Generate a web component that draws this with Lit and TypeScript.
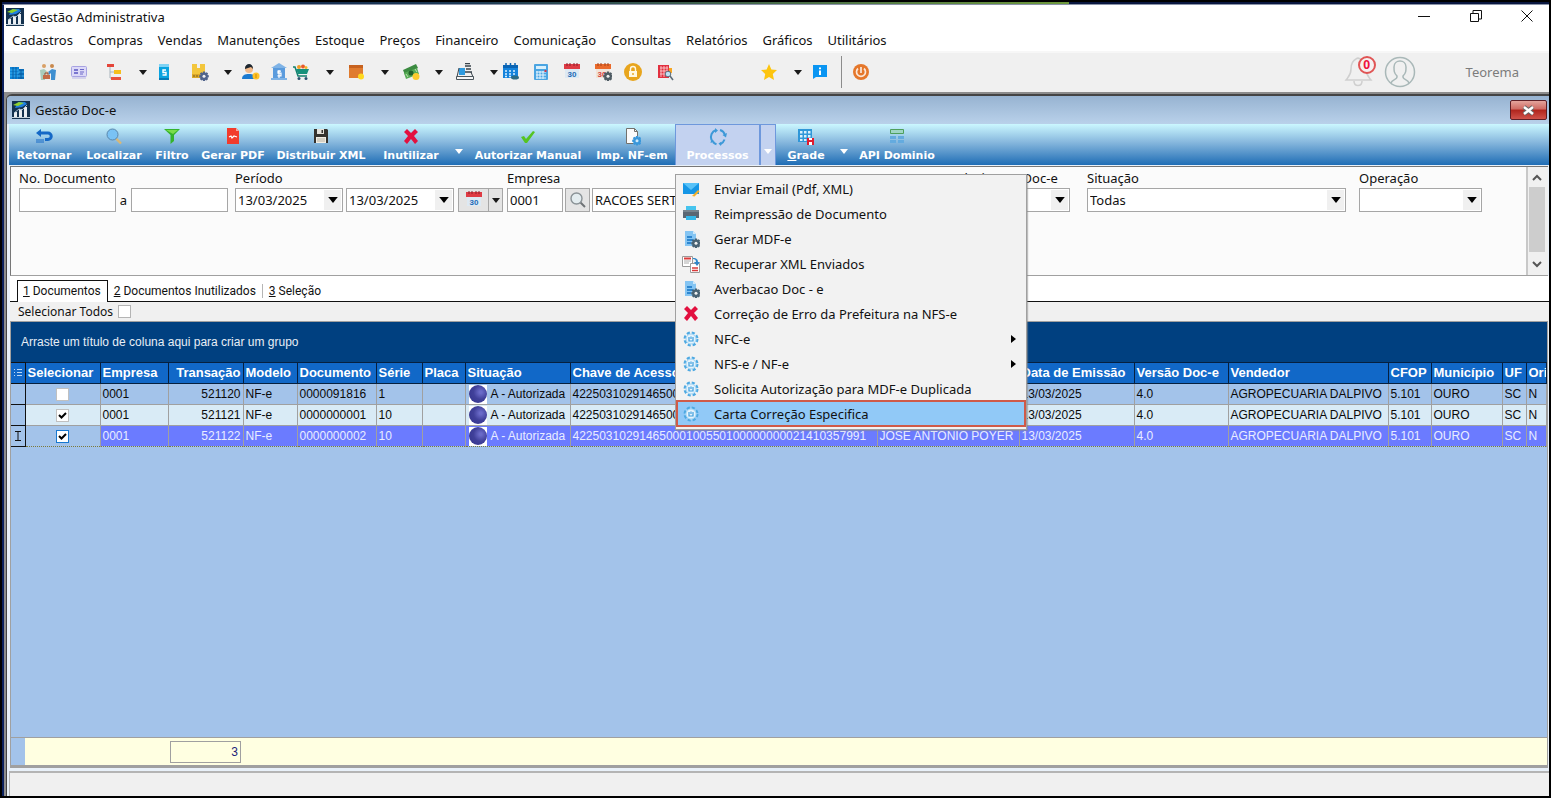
import { LitElement, html, svg, css, nothing, TemplateResult } from "lit";
import { customElement } from "lit/decorators.js";
import { classMap } from "lit/directives/class-map.js";
import { styleMap } from "lit/directives/style-map.js";

const gear = (x: number, y: number, c: string, hole: string) => svg`
  <g transform="translate(${x} ${y})">
    <path fill=${c} d="M-1-4.5h2l.4 1.4 1.3-.7 1.4 1.4-.7 1.3 1.4.4v2l-1.4.4.7 1.3-1.4 1.4-1.3-.7-.4 1.4h-2l-.4-1.4-1.3.7-1.4-1.4.7-1.3-1.4-.4v-2l1.4-.4-.7-1.3 1.4-1.4 1.3.7z"/>
    <circle r="1.5" cy=".3" fill=${hole}/>
  </g>`;

const ICONS: Record<string, TemplateResult> = {
  app: svg`<rect width="18" height="18" fill="#14324f"/><path d="M6 1h7l2 2-5 3-7 1z" fill="#1f7fe0"/><path d="M1 4l6-3 5 1-6 3z" fill="#8fd12c"/><path d="M2 11h3v5H2zM7 8h3v8H7zM12 6h3v10h-3z" fill="#e9eef2"/><path d="M2 12l5-4 3 1 5-5" stroke="#9fb6c8" fill="none"/><path d="M0 16h18v1H0z" fill="#c4d2dc"/>`,
  building: svg`<path d="M2 4h9v12H2z" fill="#0d84d8"/><path d="M10 6h6v10h-6z" fill="#0b6cb8"/><path d="M2 7h9M2 10h9M2 13h14M10 9h6" stroke="#3db2f3"/><path d="M5 4v12M8 4v12M13 7v9" stroke="#0a5c9f"/>`,
  people: svg`<circle cx="5" cy="3" r="2" fill="#d9a066"/><circle cx="13" cy="3" r="2" fill="#c98a4d"/><path d="M1 7l4-1 4 3-1 3-2-2v7H2z" fill="#a9cdbb"/><path d="M17 7l-4-1-4 3 1 3 2-2v7h4z" fill="#3f8fd0"/><path d="M7 8l3 2-3 2z" fill="#f3c9a0"/><path d="M4 12h7v4H4z" fill="#c46c45"/><path d="M6 12v-2h3v2" stroke="#8a4a30" fill="none"/>`,
  card: svg`<rect x="1.500" y="3.500" width="15" height="10" rx="1" fill="#dcd9f7" stroke="#a7a2e2"/><path d="M4 7h4M4 10h4" stroke="#7a76cf" stroke-width="2"/><path d="M10 6.500h4M10 9h4M10 11h3" stroke="#6c68c8"/><path d="M2 15h14" stroke="#b9b5e8"/>`,
  tree: svg`<path d="M5 4v11h5M5 9h5" fill="none" stroke="#a8b4bd"/><path d="M2 1h7v3H2z" fill="#e4453a"/><path d="M9 7h7v4H9z" fill="#f6bf1d"/><path d="M6 14h10v3H6z" fill="#e8513f"/>`,
  book: svg`<path d="M4 1h10v16H4z" fill="#09a3e0"/><path d="M4 1h10v3H4z" fill="#7fd3f4"/><path d="M4 15h10v2H4z" fill="#0579b5"/><path d="M11 7H8v2.500h3V12H7.500" fill="none" stroke="#fff" stroke-width="1.400"/>`,
  box: svg`<path d="M1 1h5v4h3V1h5v14H1z" fill="#f3c63c"/><path d="M1 11h8v4H1z" fill="#dca928"/><path d="M3 12v2M6 12v2" stroke="#7b5d20"/>${gear(13, 13, "#51648c", "#f0f0f0")}`,
  person: svg`<circle cx="7" cy="6" r="4" fill="#f2b98a"/><path d="M3 6c-.5-6 8-7 8 0L9 4z" fill="#1d2731"/><path d="M0 16c0-4 3-5 7-5s6 1 6 5z" fill="#1b7ad0"/><circle cx="14" cy="13" r="3.500" fill="#ffc229"/><path d="M14 11v4" stroke="#d18b00"/>`,
  bank: svg`<path d="M9 0l8 5H1z" fill="#7fb3e6"/><path d="M3 5h12v10H3z" fill="#5a9bdd"/><path d="M1 15h16v2H1z" fill="#7fb3e6"/><path d="M11 8.200H8v2h3v2.600H7.500M9 7v8" fill="none" stroke="#fff" stroke-width="1.200"/>`,
  cart: svg`<path d="M1 4h2l3 9h9" fill="none" stroke="#12806e" stroke-width="1.500"/><path d="M4 6h13l-2 5H6z" fill="#16917b"/><circle cx="7" cy="4" r="2" fill="#f09b26"/><circle cx="11" cy="3.500" r="2" fill="#e85a2a"/><circle cx="14" cy="4.500" r="1.500" fill="#f2b62a"/><circle cx="7" cy="15.500" r="1.500" fill="#28516e"/><circle cx="14" cy="15.500" r="1.500" fill="#28516e"/>`,
  carton: svg`<path d="M2 2h14v13H2z" fill="#e07b2e"/><path d="M2 2h14v3H2z" fill="#c7621f"/><circle cx="14" cy="13.500" r="3" fill="#ffd91f"/>`,
  money: svg`<path d="M1 7l13-6 2 4-13 7z" fill="#3c8b41"/><path d="M2 10l13-5 2 6-13 5z" fill="#57ab55"/><circle cx="9" cy="10" r="2.500" fill="#22602b"/><path d="M4 11l2 3M13 6l2 3" stroke="#bfe2b4"/><circle cx="14" cy="13.500" r="3.500" fill="#ffcb2e"/>`,
  register: svg`<path d="M3 5h6v7H3z" fill="#2f9be0"/><path d="M9 .500h5M9 3h6M10 6h5M9 9h7" stroke="#39434b" stroke-width="1.300"/><path d="M3 5L1 14M15 9l2 5" stroke="#39434b"/><path d="M.500 13.500h17v3H.500z" fill="#f6f6f6" stroke="#4c565d"/>`,
  calendar: svg`<path d="M1 2h15v13H1z" fill="#1583dc"/><path d="M1 2h15v3H1z" fill="#0a64b4"/><path d="M3 8h2M7 8h2M11 8h2M3 11h2M7 11h2M11 11h2M3 13.500h2M7 13.500h2" stroke="#d7efff" stroke-width="1.500"/><path d="M4 0v3M8.500 0v3M13 0v3" stroke="#0a64b4" stroke-width="1.500"/><ellipse cx="13" cy="14.500" rx="4" ry="2" fill="#2c6b85"/>`,
  calculator: svg`<rect x="2" y="1" width="14" height="16" rx="1" fill="#4ba5e2"/><path d="M4 3h10v3H4z" fill="#d9f0fc"/><path d="M5 8v8M8 8v8M11 8v8M4 9h10M4 12h10M4 15h10" stroke="#e8f6ff"/><path d="M13.500 7v2" stroke="#d0374a" stroke-width="2"/>`,
  cal30: svg`<path d="M2 3h14v12H2z" fill="#dde9f3"/><path d="M1 1h16v5H1z" fill="#de3b44"/><path d="M4 0v3M7 0v3M11 0v3M14 0v3" stroke="#8f1f2a"/><text x="9" y="14" font-family="Liberation Sans" font-size="8" font-weight="700" text-anchor="middle" fill="#1e6cb6">30</text>`,
  cal30g: svg`<path d="M2 3h14v12H2z" fill="#f1e3d9"/><path d="M1 1h16v5H1z" fill="#ea6a2b"/><path d="M4 0v3M7 0v3M11 0v3M14 0v3" stroke="#a3431a"/><text x="8" y="14" font-family="Liberation Sans" font-size="8" font-weight="700" text-anchor="middle" fill="#d6453c">30</text>${gear(14, 13, "#4e5b63", "#f0f0f0")}`,
  lock: svg`<circle cx="9" cy="9" r="9" fill="#e8a51d"/><path d="M5 8h8v6H5z" fill="#fff8e2"/><path d="M6.500 8V6a2.500 2.500 0 0 1 5 0v2" fill="none" stroke="#fff8e2" stroke-width="1.400"/><path d="M9 10v2" stroke="#e8a51d" stroke-width="1.400"/>`,
  search: svg`<path d="M2 2h11v13H2z" fill="#e2303f"/><path d="M4 5h8M4 8h8M4 11h8M5 3v11M8 3v11M11 3v11" stroke="#ffd9dc" stroke-width=".8"/><path d="M13 5h3v5h-3z" fill="#f6a623"/><circle cx="12" cy="11" r="2.800" fill="#bfe1f5" stroke="#5b6b77"/><path d="M14 13l3 4" stroke="#5b6b77" stroke-width="1.500"/>`,
  star: svg`<path d="M9 1l2.400 5.400 5.600.6-4.200 3.900L14 17l-5-3.100L4 17l1.200-6.100L1 7l5.600-.6z" fill="#fdc50f"/>`,
  info: svg`<path d="M2 2h14v12H5l-3 2z" fill="#0a95f2"/><path d="M9 4.500v1.800M9 7.500V12" stroke="#fff" stroke-width="2"/>`,
  power: svg`<circle cx="9" cy="9" r="8" fill="#e5772b"/><path d="M6 5.500a4.500 4.500 0 1 0 6 0M9 4v6" fill="none" stroke="#fbe8da" stroke-width="1.700"/>`,
  back: svg`<path d="M1 5l5-4v2.500h7a4 4 0 0 1 0 9.500h-3v-3h3a1.500 1.500 0 0 0 0-3.500H6V9z" fill="#1468c6"/><path d="M2 11v4M4 11v4M6 11v4M8 11v4" stroke="#1468c6"/>`,
  lens: svg`<path d="M11 10.500l5 5" stroke="#d8b878" stroke-width="2.400"/><circle cx="7.500" cy="6.500" r="5.500" fill="#79c2f4" stroke="#5a86ab"/>`,
  funnel: svg`<path d="M1 1h16l-6 6v6l-3.500 3V7z" fill="#35b32c"/><path d="M3 2h12l-5 4z" fill="#7bdc4b"/>`,
  pdf: svg`<path d="M3 0h9l3 3v13H3z" fill="#f23b2c"/><path d="M12 0v3h3z" fill="#f9a69e"/><path d="M5 9l2-1 1 2 2-2 3 1" stroke="#fff" stroke-width="1.200" fill="none"/>`,
  floppy: svg`<path d="M2 1h13l1 1v13H2z" fill="#35322d"/><path d="M5 1h7v5H5z" fill="#e4e1da"/><path d="M9.500 2h1.500v3H9.500z" fill="#35322d"/><path d="M4 9h10v6H4z" fill="#f2eee4"/><path d="M5 11h8M5 13h8" stroke="#b8b2a4"/>`,
  cross: svg`<path d="M2 4l3-3 4 4 4-4 3 3-4 4 4 5-3 3-4-5-4 5-3-3 4-5z" fill="#e2103f"/>`,
  check: svg`<path d="M2 9l3-1 2 3 7-8 2 1-8 11H6z" fill="#55c421"/>`,
  doc: svg`<path d="M3.500 .500h8l3 3v12h-11z" fill="#fbfbfb" stroke="#72716d"/><path d="M11.500 .500v3h3" fill="none" stroke="#72716d"/>${gear(14, 12.5, "#3a97da", "#cfe9fa")}`,
  cycle: svg`<g fill="none" stroke="#3d99d8" stroke-width="2"><path d="M2.500 12A7.500 7.500 0 0 1 7 2M11 2a7.500 7.500 0 0 1 5 5M15.500 11.500a7.500 7.500 0 0 1-4 4.500M7.500 16.300A7.500 7.500 0 0 1 4 14"/></g><path d="M6 0l3 2.500L6 5zM18 5l-1 4.500L13.500 7zM12 18l-2.500-2.500 3-2zM1.500 15l1-4.500 3 3z" fill="#3d99d8"/>`,
  grade: svg`<path d="M1 1h14v13H1z" fill="#2f97d8"/><path d="M3 3h2.500v2.500H3zM7 3h2.500v2.500H7zM11 3h2.500v2.500H11zM3 7h2.500v2.500H3zM7 7h2.500v2.500H7zM11 7h2.500v2.500H11zM3 11h2.500v2H3zM7 11h2.500v2H7z" fill="#d8f0fb"/><path d="M10 10h7v7h-7z" fill="#e01a2f"/><path d="M12 10h3v2h-3zM12 14h3v3h-3z" fill="#fff"/>`,
  api: svg`<path d="M2.500 1.500h13v4h-13z" fill="#9ed6c4" stroke="#4f9f5c"/><path d="M2 8h6v3H2zM10 8h6v3h-6zM2 12h6v3H2zM10 12h6v3h-6z" fill="#64abdf"/>`,
  mail: svg`<path d="M1 3h16v11H1z" fill="#1596e6"/><path d="M1 3h16l-8 7z" fill="#58c2f8"/><path d="M10 16l6-6 1.500 1.500-5 5z" fill="#f3b02a"/>`,
  printer: svg`<path d="M4 1h10v5H4z" fill="#46c4ee"/><path d="M1 5h16v8H1z" fill="#5a6773"/><path d="M1 5h16v2H1z" fill="#77858f"/><path d="M4 11h10v4H4z" fill="#36b7e8"/>`,
  mdf: svg`<path d="M3 1h8l3 3v12H3z" fill="#85c5f3"/><path d="M11 1v3h3z" fill="#d0eafb"/><path d="M5 7h5M5 10h6M5 13h4" stroke="#1272c4" stroke-width="1.500"/>${gear(14, 13, "#4a6374", "#f2f2f2")}`,
  recover: svg`<path d="M.500 1.500h10v10h-10z" fill="#fff" stroke="#9a9a9a"/><path d="M2 3.500h7" stroke="#d93a3a" stroke-width="2"/><path d="M2 6h7M2 8h5" stroke="#aaa"/><path d="M8.500 8.500h9v9h-9z" fill="#fff" stroke="#9a9a9a"/><path d="M10 13h6M10 15.500h6" stroke="#d93a3a" stroke-width="1.500"/><path d="M11 3c4 0 5 2 5 4h2l-3 4-3-4h2c0-2-1-3-3-3z" fill="#2f86c8"/>`,
  cog: svg`<circle cx="9" cy="9" r="6" fill="none" stroke="#4ea9e2" stroke-width="3" stroke-dasharray="2.900 1.812"/><circle cx="9" cy="9" r="5.400" fill="#e6f3fc"/><circle cx="9" cy="9" r="5" fill="none" stroke="#8ccaf0" stroke-width=".8"/><path d="M7 7v4h4V7M9 6.500V9" fill="none" stroke="#3f9fdc" stroke-width="1.200"/>`,
  glass: svg`<path d="M11 11l5 5" stroke="#6f7477" stroke-width="2"/><circle cx="7.500" cy="7.500" r="5.500" fill="#e3ecef" stroke="#8a9296" stroke-width="1.400"/>`,
};

const icon = (name: string) =>
  html`<svg class="icon" viewBox="0 0 18 18" aria-hidden="true">${ICONS[name]}</svg>`;
const caret = () =>
  html`<svg class="caret" viewBox="0 0 8 5" aria-hidden="true"><path d="M0 0h8L4 5z" /></svg>`;

const MENUS = ["Cadastros", "Compras", "Vendas", "Manutenções", "Estoque", "Preços", "Financeiro", "Comunicação", "Consultas", "Relatórios", "Gráficos", "Utilitários"];

/* icon ("" = drop-down arrow, "|" = divider), space before it, label */
const TOOLS: [string, number, string][] = [
  ["building", 4, "Empresas"], ["people", 13, "Clientes"], ["card", 13, "Cartões"], ["tree", 17, "Estrutura"], ["", 16, "Opções de estrutura"],
  ["book", 8, "Serviços"], ["box", 18, "Produtos"], ["", 15, "Opções de produtos"], ["person", 10, "Vendedores"], ["bank", 10, "Bancos"],
  ["cart", 4, "Pedidos"], ["", 16, "Opções de pedidos"], ["carton", 13, "Estoque"], ["", 16, "Opções de estoque"], ["money", 13, "Caixa"],
  ["", 15, "Opções de caixa"], ["register", 13, "PDV"], ["", 16, "Opções de PDV"], ["calendar", 4, "Agenda"], ["calculator", 12, "Calculadora"],
  ["cal30", 13, "Calendário"], ["cal30g", 13, "Configurar calendário"], ["lock", 12, "Bloqueio"], ["search", 14, "Pesquisa"],
  ["star", 86, "Favoritos"], ["", 16, "Opções de favoritos"], ["info", 9, "Informações"], ["|", 12, ""], ["power", 10, "Sair"],
];

interface Action { text: string; icon: string; width: number; arrow?: boolean; open?: boolean; key?: boolean; }
const ACTIONS: Action[] = [
  { text: "Retornar", icon: "back", width: 70 },
  { text: "Localizar", icon: "lens", width: 70 },
  { text: "Filtro", icon: "funnel", width: 46 },
  { text: "Gerar PDF", icon: "pdf", width: 76 },
  { text: "Distribuir XML", icon: "floppy", width: 100 },
  { text: "Inutilizar", icon: "cross", width: 80, arrow: true },
  { text: "Autorizar Manual", icon: "check", width: 122 },
  { text: "Imp. NF-em", icon: "doc", width: 86 },
  { text: "Processos", icon: "cycle", width: 85, arrow: true, open: true },
  { text: "Grade", icon: "grade", width: 60, arrow: true, key: true },
  { text: "API Dominio", icon: "api", width: 90 },
];

const PROCESSES: { text: string; icon: string; sub?: boolean; current?: boolean }[] = [
  { text: "Enviar Email (Pdf, XML)", icon: "mail" },
  { text: "Reimpressão de Documento", icon: "printer" },
  { text: "Gerar MDF-e", icon: "mdf" },
  { text: "Recuperar XML Enviados", icon: "recover" },
  { text: "Averbacao Doc - e", icon: "mdf" },
  { text: "Correção de Erro da Prefeitura na NFS-e", icon: "cross" },
  { text: "NFC-e", icon: "cog", sub: true },
  { text: "NFS-e / NF-e", icon: "cog", sub: true },
  { text: "Solicita Autorização para MDF-e Duplicada", icon: "cog" },
  { text: "Carta Correção Especifica", icon: "cog", current: true },
];

const COLUMNS: [string, number][] = [
  ["Selecionar", 75], ["Empresa", 68], ["Transação", 75], ["Modelo", 54], ["Documento", 79], ["Série", 46], ["Placa", 43],
  ["Situação", 105], ["Chave de Acesso", 307], ["Razão Social", 142], ["Data de Emissão", 115], ["Versão Doc-e", 94],
  ["Vendedor", 160], ["CFOP", 43], ["Município", 71], ["UF", 24], ["Origem", 0],
];
const KEY = "42250310291465000100550100000000021410357991";
const row = (transacao: string, documento: string, serie: string) => [
  "0001", transacao, "NF-e", documento, serie, "", "A - Autorizada", KEY, "JOSE ANTONIO POYER",
  "13/03/2025", "4.0", "AGROPECUARIA DALPIVO", "5.101", "OURO", "SC", "N",
];
const ROWS = [
  { checked: false, cells: row("521120", "0000091816", "1") },
  { checked: true, cells: row("521121", "0000000001", "10") },
  { checked: true, cells: row("521122", "0000000002", "10"), focused: true },
];

const base = css`
  * { box-sizing: border-box; }
  button, input, select { font: inherit; color: inherit; margin: 0; padding: 0; border: 0; background: none; border-radius: 0; }
  .icon { display: block; width: 18px; height: 18px; flex: none; }
  .caret { display: block; width: 8px; height: 5px; fill: #1a1a1a; flex: none; }
`;

@customElement("main-bar")
class MainBar extends LitElement {
  static styles = [base, css`
    :host { display: block; background: #fff; }
    .title { display: flex; align-items: center; gap: 6px; height: 24px; padding-left: 2px; color: #111; }
    .name { flex: 1; }
    .win { width: 46px; height: 22px; display: grid; place-items: center; align-self: flex-start; }
    .win svg { width: 12px; height: 12px; fill: none; stroke: #111; }
    .win:last-child { width: 44px; }
    .menu { display: flex; gap: 15px; height: 22px; align-items: center; padding-left: 8px; margin: 0; }
    .menu a { color: #111; text-decoration: none; }
    .tools { display: flex; align-items: center; height: 41px; background: #f0f0f0; border-top: 2px solid #f7f7f7; padding-bottom: 1px; }
    .tool { display: block; }
    .rule { width: 1px; height: 32px; background: #8c8c8c; }
    .user { display: flex; align-items: center; margin-left: auto; padding-right: 30px; gap: 10px; color: #7c7c7c; }
    .bell { position: relative; }
    .bell svg { display: block; width: 30px; height: 34px; }
    .badge { position: absolute; top: 1px; right: -2px; width: 18px; height: 18px; border: 2px solid #e05555; border-radius: 50%; background: #f5f0f0; color: #f0143c; font: 700 12px/14px "Noto Sans", sans-serif; text-align: center; }
    .avatar { width: 32px; height: 32px; display: block; margin-right: 40px; }
  `];
  render() {
    return html`
      <header class="title">
        ${icon("app")}<span class="name">Gestão Administrativa</span>
        <button class="win" aria-label="Minimizar"><svg viewBox="0 0 12 12"><path d="M0 6.500h12" /></svg></button>
        <button class="win" aria-label="Restaurar"><svg viewBox="0 0 12 12"><path d="M.500 3.500h8v8h-8zM3 3V.500h8.500V9H9" /></svg></button>
        <button class="win" aria-label="Fechar"><svg viewBox="0 0 12 12"><path d="M.500.500l11 11M11.500.500l-11 11" /></svg></button>
      </header>
      <nav class="menu">${MENUS.map((m) => html`<a href="#">${m}</a>`)}</nav>
      <div class="tools">
        ${TOOLS.map(([name, space, label]) => {
          const place = styleMap({ marginLeft: space + "px" });
          return name === "|"
            ? html`<span class="rule" style=${place}></span>`
            : html`<button class="tool" style=${place} aria-label=${label}>${name ? icon(name) : caret()}</button>`;
        })}
        <div class="user">
          <button class="bell" aria-label="Notificações">
            <svg viewBox="0 0 30 34"><path d="M12 4a3 3 0 0 1 4 0c5 2 6 5 6 10 0 6 2 7 5 11H2c3-4 5-5 5-11 0-5 1-8 5-10zM10 26c0 6 8 6 8 0" fill="none" stroke="#cfcfcf" stroke-width="1.500" /></svg>
            <span class="badge">0</span>
          </button>
          <svg class="avatar" viewBox="0 0 32 32" aria-hidden="true"><g fill="none" stroke="#a9b8b8" stroke-width="1.500"><circle cx="16" cy="16" r="14.500" /><path d="M7 27c1-4 7-3 6-7-3-3-3-5-3-9 0-8 12-8 12 0 0 4 0 6-3 9-1 4 5 3 6 7" /></g></svg>
          <span>Teorema</span>
        </div>
      </div>`;
  }
}

@customElement("action-bar")
class ActionBar extends LitElement {
  static styles = [base, css`
    :host { display: block; }
    .bar { display: flex; height: 41px; background: linear-gradient(#cbf7ff, #86b7dd 45%, #1f6db5); font: 700 11px/14px "DejaVu Sans", sans-serif; color: #fff; }
    .group { position: relative; display: flex; }
    .act { display: flex; flex-direction: column; align-items: center; gap: 3px; padding-top: 4px; white-space: nowrap; }
    .drop { width: 16px; display: grid; place-items: center; padding-top: 13px; }
    .bar .caret { fill: #fff; }
    .open .act, .open .drop { background: #c3d2f0; border: 1px solid #6e98dc; border-bottom: 0; padding-top: 3px; }
    .open .drop { padding-top: 12px; }
    .key { text-decoration: underline; }
    .menu { position: absolute; z-index: 5; top: calc(100% + 9px); left: 0; width: 352px; margin: 0; padding: 1px 1px 3px; list-style: none; background: #f2f2f2; border: 1px solid #a0a0a0; box-shadow: 1px 1px 1px #8888; font: 13px/18px "Noto Sans", sans-serif; color: #111; }
    .item { display: flex; align-items: center; gap: 14px; width: 100%; height: 25px; padding: 0 9px 0 5px; text-align: left; }
    .item span { flex: 1; }
    .current { background: #91c9f7; outline: 2px solid #cf5a48; outline-offset: -1px; }
    .more { width: 5px; height: 8px; }
  `];
  render() {
    return html`<div class="bar" role="toolbar">
      ${ACTIONS.map((a) => html`
        <div class=${classMap({ group: true, open: !!a.open })}>
          <button class="act" style=${styleMap({ width: a.width + "px" })}>
            ${icon(a.icon)}<span>${a.key ? html`<span class="key">${a.text[0]}</span>${a.text.slice(1)}` : a.text}</span>
          </button>
          ${a.arrow ? html`<button class="drop" aria-label="Opções de ${a.text}">${caret()}</button>` : nothing}
          ${a.open ? html`<ul class="menu" role="menu">
            ${PROCESSES.map((p) => html`<li role="none"><button role="menuitem" class=${classMap({ item: true, current: !!p.current })}>
              ${icon(p.icon)}<span>${p.text}</span>
              ${p.sub ? html`<svg class="more" viewBox="0 0 5 8" aria-hidden="true"><path d="M0 0l5 4-5 4z" /></svg>` : nothing}
            </button></li>`)}
          </ul>` : nothing}
        </div>`)}
    </div>`;
  }
}

@customElement("filter-panel")
class FilterPanel extends LitElement {
  static styles = [base, css`
    :host { display: flex; height: 110px; border: 1px solid #777; border-right: 0; border-bottom-color: #a0a0a0; background: #fbfbfb; margin: 1px 1px 0; }
    form { flex: 1; display: flex; align-items: flex-start; padding: 1px 0 0 8px; min-width: 0; }
    .field { display: flex; flex-direction: column; flex: none; }
    .field > label { height: 20px; line-height: 20px; white-space: nowrap; }
    .line { display: flex; align-items: center; }
    .box { height: 24px; border: 1px solid #a6a6a6; background: #fff; padding: 0 2px; width: 97px; }
    .to { width: 15px; text-align: center; }
    .doc { margin-right: 7px; }
    .combo { display: grid; grid-template-columns: 1fr 18px; width: 108px; height: 24px; border: 1px solid #a6a6a6; background: #fff; align-items: center; }
    .combo select { grid-area: 1 / 1 / 2 / 3; appearance: none; width: 100%; height: 22px; padding-left: 2px; outline: 0; }
    .face { grid-area: 1 / 2; height: 20px; margin-right: 1px; background: #f0f0f0; display: grid; place-items: center; pointer-events: none; }
    .face .caret { width: 10px; height: 6px; fill: #000; }
    .dates { gap: 3px; }
    .when { display: flex; height: 24px; border: 1px solid #a6a6a6; background: #e4e4e4; margin: 0 4px 0 1px; }
    .pick { width: 29px; display: grid; place-items: center; }
    .pull { width: 14px; border-left: 1px solid #a6a6a6; display: grid; place-items: center; }
    .code { width: 56px; }
    .find { width: 25px; height: 24px; border: 1px solid #a6a6a6; background: #e4e4e4; display: grid; place-items: center; margin: 0 2px; }
    .firm { width: 346px; margin-right: 12px; }
    .tipo { width: 120px; margin-right: 17px; }
    .situ { width: 259px; margin-right: 13px; }
    .oper { width: 123px; }
    .tipo .combo, .situ .combo, .oper .combo { width: 100%; }
    .scroll { width: 22px; padding: 0 3px 0 1px; border-left: 2px solid #c8c8c8; background: #f0f0f0; display: flex; flex-direction: column; align-items: center; }
    .scroll svg { width: 10px; height: 20px; flex: none; fill: none; stroke: #555; stroke-width: 2; }
    .thumb { width: 100%; height: 65px; background: #cdcdcd; margin-bottom: auto; }
  `];
  combo(id: string, value: string, label = "") {
    return html`<span class="combo">
      <select id=${id} aria-label=${label || nothing}><option>${value}</option></select>
      <span class="face">${caret()}</span>
    </span>`;
  }
  render() {
    return html`
      <form>
        <div class="field doc"><label for="from">No. Documento</label>
          <div class="line"><input class="box" id="from" /><span class="to">a</span><input class="box" aria-label="Documento final" /></div></div>
        <div class="field"><label for="start">Período</label>
          <div class="line dates">${this.combo("start", "13/03/2025")}${this.combo("end", "13/03/2025", "Data final")}
            <span class="when"><button type="button" class="pick" aria-label="Calendário">${icon("cal30")}</button><button type="button" class="pull" aria-label="Períodos">${caret()}</button></span></div></div>
        <div class="field"><label for="firm">Empresa</label>
          <div class="line"><input class="box code" id="firm" value="0001" />
            <button type="button" class="find" aria-label="Buscar empresa">${icon("glass")}</button>
            <input class="box firm" aria-label="Nome da empresa" value="RACOES SERTANEJO" /></div></div>
        <div class="field tipo"><label for="tipo">Selecione o Doc-e</label>${this.combo("tipo", "")}</div>
        <div class="field situ"><label for="situ">Situação</label>${this.combo("situ", "Todas")}</div>
        <div class="field oper"><label for="oper">Operação</label>${this.combo("oper", "")}</div>
      </form>
      <div class="scroll" aria-hidden="true">
        <svg viewBox="0 0 10 20"><path d="M1 13l4-4 4 4" /></svg>
        <div class="thumb"></div>
        <svg viewBox="0 0 10 20"><path d="M1 7l4 4 4-4" /></svg>
      </div>`;
  }
}

@customElement("document-grid")
class DocumentGrid extends LitElement {
  static styles = [base, css`
    :host { display: flex; flex-direction: column; flex: 1; min-height: 0; margin: 0 1px; border: 1px solid #a0a0a0; border-bottom-width: 3px; background: #a3c3ea; font: 12px/16px "Liberation Sans", sans-serif; color: #0a0a0a; overflow: hidden; }
    .drop { height: 40px; padding-left: 10px; line-height: 41px; background: #004080; color: #e8eef6; flex: none; }
    .scroller { flex: 1; overflow: hidden; }
    table { width: 100%; table-layout: fixed; border-collapse: collapse; }
    th { height: 21px; padding: 0 2px; background: #1168c8; color: #fff; border: 1px solid #06203f; border-left: 0; text-align: left; font-weight: 700; font-size: 13px; white-space: nowrap; overflow: hidden; }
    td { height: 21px; padding: 0 2px; border: 1px solid #a0a0a0; border-width: 0 1px 1px 0; white-space: nowrap; overflow: hidden; }
    .mark { border-color: #111; padding: 0; text-align: center; background: #a3c3ea; }
    th.mark { background: #1168c8; }
    .mark svg { display: block; margin: auto; width: 8px; height: 12px; fill: none; stroke: #111; }
    th.mark svg { stroke: #bcd8f6; }
    .num { text-align: right; }
    .alt td { background: #d9ebf6; }
    .alt td.mark { background: #a3c3ea; }
    .on td { background: #6b7bff; color: #e9edff; border-bottom: 1px dotted #7d7a3c; border-top: 1px dotted #7d7a3c; }
    .on td.sel { background: #a3c3ea; }
    .on td.mark { background: #a3c3ea; border-color: #111; border-style: solid; }
    .sel { text-align: center; }
    .sel label { display: flex; justify-content: center; }
    input[type="checkbox"] { appearance: none; display: block; width: 13px; height: 13px; background: #fff; border: 1px solid #c0c0c0; }
    .tick { display: grid; }
    .tick > * { grid-area: 1 / 1; }
    .tick svg { width: 13px; height: 13px; fill: none; stroke: #000; stroke-width: 2; pointer-events: none; }
    .on input[type="checkbox"] { border-color: #1878d0; }
    .state { display: flex; align-items: center; gap: 4px; }
    .ball { background: radial-gradient(circle at 65% 40%, #6a6ac8 0 8%, #40409a 45%, #34348c 100%); border-radius: 50%; }
    .pad { background: #fff; height: 19px; margin-left: 1px; }
    .foot { display: flex; height: 28px; background: #ffffe1; border-top: 1px solid #a0a0a0; flex: none; }
    .foot .edge { width: 14px; background: #a3c3ea; }
    .count { width: 71px; margin: 3px 0 2px 145px; border: 1px solid #a0a0a0; color: #22227a; text-align: right; padding-right: 2px; line-height: 20px; }
  `];
  cell(text: string, i: number) {
    if (i === 6) return html`<td><span class="state"><span class="pad"><span class="ball icon"></span></span>${text}</span></td>`;
    return html`<td class=${i === 1 ? "num" : ""}>${text}</td>`;
  }
  render() {
    return html`
      <div class="drop">Arraste um título de coluna aqui para criar um grupo</div>
      <div class="scroller"><table>
        <colgroup><col style="width:14px" />${COLUMNS.map(([, w]) => html`<col style=${w ? styleMap({ width: w + "px" }) : nothing} />`)}</colgroup>
        <thead><tr>
          <th class="mark" aria-label="Indicador"><svg viewBox="0 0 8 12"><path d="M0 2.500h1M3 2.500h5M0 5.500h1M3 5.500h5M0 8.500h1M3 8.500h5" /></svg></th>
          ${COLUMNS.map(([name]) => html`<th class=${name === "Transação" ? "num" : ""}>${name}</th>`)}
        </tr></thead>
        <tbody>${ROWS.map((r, n) => html`
          <tr class=${classMap({ alt: n === 1, on: !!r.focused })}>
            <td class="mark">${r.focused ? html`<svg viewBox="0 0 8 12"><path d="M1 1.500h6M4 1.500v9M1 10.500h6" /></svg>` : nothing}</td>
            <td class="sel"><label><span class="tick"><input type="checkbox" aria-label="Selecionar ${r.cells[3]}" .checked=${r.checked} />${r.checked ? html`<svg viewBox="0 0 13 13" aria-hidden="true"><path d="M3 6l2.500 2.500L10 4" /></svg>` : nothing}</span></label></td>
            ${r.cells.map((c, i) => this.cell(c, i))}
          </tr>`)}</tbody>
      </table></div>
      <div class="foot"><span class="edge"></span><span class="count">${ROWS.length}</span></div>`;
  }
}

@customElement("app-root")
class AppRoot extends LitElement {
  static styles = [base, css`
    :host { display: flex; flex-direction: column; height: 100vh; box-sizing: border-box; padding: 2px; background: #000; font: 13px/18px "Noto Sans", sans-serif; color: #111; overflow: hidden; }
    .strip { height: 2px; background: linear-gradient(90deg, #0a1a4a, #1d3a55 30%, #6f9a3c 69%, #0a1740 69%); flex: none; }
    .shell { flex: 1; min-height: 0; display: flex; flex-direction: column; border-left: 2px solid #0a1f5c; border-top: 1px solid #8a93a8; background: #8c8c8c; }
    .child { flex: 1; min-height: 0; display: flex; flex-direction: column; margin: 2px 0 0 2px; border: solid #444; border-width: 2px 0 0 1px; border-radius: 6px 0 0 0; padding-left: 2px; background: #e9f1f9; }
    .title { display: flex; align-items: center; gap: 5px; height: 28px; margin-left: -2px; padding: 0 2px 0 5px; background: linear-gradient(#97b3d1, #b9d1ea); border-radius: 4px 0 0 0; flex: none; }
    .name { flex: 1; }
    .close { width: 37px; height: 20px; border: 1px solid #5e1f26; border-radius: 2px; background: linear-gradient(#e3a49c, #cf6a62 45%, #b0241c 50%, #d0524a); display: grid; place-items: center; }
    .close svg { width: 13px; height: 11px; }
    .tabs { display: flex; align-items: flex-end; height: 26px; margin-left: 1px; background: #fff; font-family: Roboto, sans-serif; font-size: 12px; box-shadow: inset 0 -1px #111; padding-left: 7px; flex: none; }
    .tab { height: 21px; padding: 0 6px 2px; }
    .tab.active { height: 22px; border: 1px solid #111; border-bottom: 0; background: #fff; padding: 0 6px 1px 5px; }
    .split { width: 1px; height: 14px; background: #b5b5b5; margin-bottom: 4px; }
    .all { display: flex; align-items: center; gap: 5px; height: 19px; margin-left: 1px; padding-left: 8px; background: #f0f0f0; font-size: 12px; flex: none; }
    .all input { appearance: none; width: 13px; height: 13px; border: 1px solid #b4b4b4; background: #fff; }
    .status { height: 25px; margin-top: 3px; border: 1px solid #b4b4b4; border-width: 2px 0 0 1px; background: #f0f0f0; flex: none; }
  `];
  render() {
    return html`
      <div class="strip"></div>
      <div class="shell">
        <main-bar></main-bar>
        <main class="child">
          <div class="title">${icon("app")}<span class="name">Gestão Doc-e</span>
            <button class="close" aria-label="Fechar Gestão Doc-e"><svg viewBox="0 0 13 11"><path d="M2 2l9 7M11 2L2 9" stroke="#666" stroke-width="4.500" /><path d="M2 2l9 7M11 2L2 9" stroke="#fff" stroke-width="2.500" /></svg></button></div>
          <action-bar></action-bar>
          <filter-panel></filter-panel>
          <div class="tabs" role="tablist">
            <button class="tab active" role="tab" aria-selected="true"><u>1</u> Documentos</button>
            <button class="tab" role="tab"><u>2</u> Documentos Inutilizados</button>
            <span class="split"></span>
            <button class="tab" role="tab"><u>3</u> Seleção</button>
          </div>
          <div class="all"><label for="all">Selecionar Todos</label><input type="checkbox" id="all" /></div>
          <document-grid></document-grid>
          <div class="status" role="status"></div>
        </main>
      </div>`;
  }
}
